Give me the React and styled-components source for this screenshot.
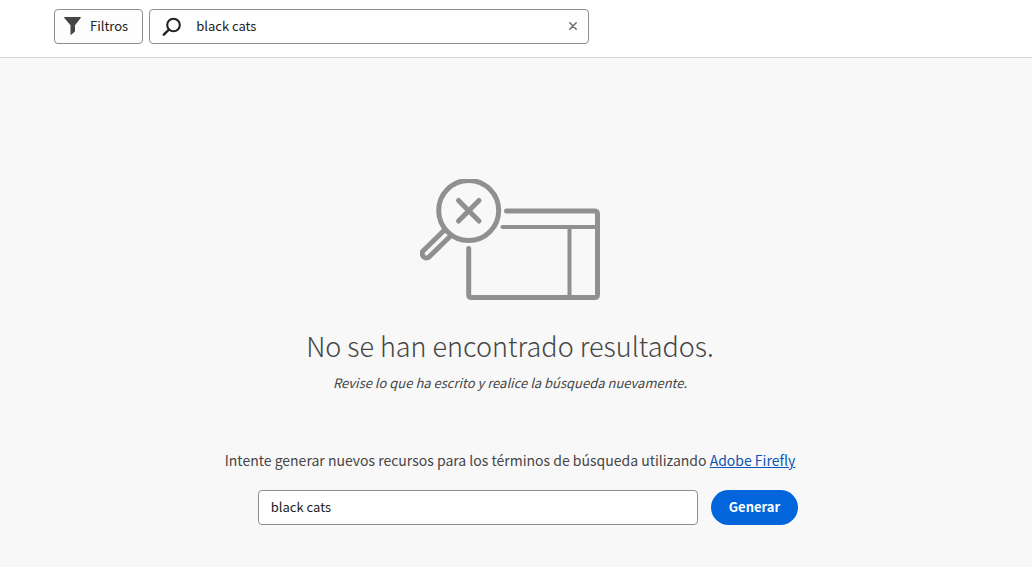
import React, { useState } from "react";
import styled, { createGlobalStyle } from "styled-components";

const GlobalStyle = createGlobalStyle`
  *, *::before, *::after { box-sizing: border-box; }
  html { background: #f8f8f8; }
  body {
    margin: 0;
    background: #f8f8f8;
    color: #464646;
    font-family: "Noto Sans CJK SC", "Open Sans", sans-serif;
    font-size: 13px;
    line-height: 20px;
  }
`;

const Toolbar = styled.header`
  display: flex;
  gap: 6px;
  padding: 9px 54px 13px;
  background: #ffffff;
  border-bottom: 1px solid #d3d3d3;
`;

const FilterButton = styled.button`
  display: flex;
  align-items: center;
  gap: 9px;
  height: 35px;
  padding: 0 14px 2px 9px;
  border: 1px solid #8e8e8e;
  border-radius: 4px;
  background: #fdfdfd;
  color: #222222;
  font: inherit;
`;

const Field = styled.div`
  display: flex;
  align-items: center;
  flex: 0 1 440px;
  min-width: 0;
  height: 35px;
  padding: 0 ${(p) => (p.$search ? "6px" : "12px")} 2px 12px;
  gap: 14px;
  border: 1px solid #8e8e8e;
  border-radius: 4px;
  background: #ffffff;
`;

const TextInput = styled.input`
  flex: 1;
  min-width: 0;
  padding: 0;
  border: 0;
  outline: 0;
  background: transparent;
  color: #222222;
  font: inherit;
`;

const ClearButton = styled.button`
  display: flex;
  align-items: center;
  justify-content: center;
  width: 18px;
  height: 24px;
  padding: 0;
  border: 0;
  background: transparent;
`;

const Main = styled.main`
  display: flex;
  flex-direction: column;
  align-items: center;
  padding: 121px 12px 42px 0;
`;

const Title = styled.h1`
  margin: 26px 0 0;
  font-size: 27px;
  font-weight: 300;
  line-height: 40px;
  text-align: center;
`;

const Hint = styled.p`
  margin: 7px 0 0;
  font-style: italic;
  text-align: center;
`;

const Suggestion = styled.p`
  margin: 57px 0 0;
  font-size: 14px;
  text-align: center;
`;

const Link = styled.a`
  color: #0d55b5;
  text-decoration: underline;
`;

const GenerateForm = styled.form`
  display: flex;
  justify-content: center;
  gap: 13px;
  width: 100%;
  margin-top: 20px;
  padding-left: 36px;
`;

const GenerateButton = styled.button`
  height: 35px;
  padding: 0 18px 2px;
  border: 0;
  border-radius: 18px;
  background: #0265dc;
  color: #ffffff;
  font: inherit;
  font-weight: 700;
`;

const FilterIcon = () => (
  <svg width="17" height="18" viewBox="0 0 17 18" fill="#464646" aria-hidden="true">
    <path d="M.8 0h15.4c.6 0 .9.7.5 1.1L11 8.2v6.2L7.2 17.8c-.3.3-.7.1-.7-.3V8.2L.3 1.1C-.1.7.2 0 .8 0Z" />
  </svg>
);

const SearchIcon = () => (
  <svg width="20" height="20" viewBox="0 0 20 20" fill="none" stroke="#222222" aria-hidden="true">
    <circle cx="11.5" cy="9" r="6.3" strokeWidth="2.1" />
    <path d="M7 13.5 1.8 18.7" strokeWidth="2.4" strokeLinecap="round" />
  </svg>
);

const ClearIcon = () => (
  <svg width="8" height="8" viewBox="0 0 8 8" fill="none" stroke="#6b6b6b" strokeWidth="1.5" strokeLinecap="round" aria-hidden="true">
    <path d="M.8.8l6.4 6.4M7.2.8.8 7.2" />
  </svg>
);

const NoResultsIllustration = () => (
  <svg width="180" height="121" viewBox="0 0 180 121" fill="none" stroke="#909090" strokeLinecap="round" strokeLinejoin="round" aria-hidden="true">
    <circle cx="48.7" cy="31.5" r="30" strokeWidth="5" />
    <path d="M38.5 21.5 59 42M59 21.5 38.5 42" strokeWidth="5" />
    <path d="M24 51.5 3.5 71.5C1.5 73.5 2 76.5 3.8 78C5.5 79.5 8 79 9.5 77.5L30.5 57" strokeWidth="5" />
    <path d="M86.5 32H174.5Q177.5 32 177.5 35V115.5Q177.5 118.5 174.5 118.5H51.5Q48.7 118.5 48.7 115.5V69.5" strokeWidth="5" />
    <path d="M82.5 48H177M149.5 48V118" strokeWidth="4" />
  </svg>
);

export default function App() {
  const [search, setSearch] = useState("black cats");
  const [prompt, setPrompt] = useState("black cats");

  return (
    <>
      <GlobalStyle />
      <Toolbar>
        <FilterButton type="button">
          <FilterIcon />
          Filtros
        </FilterButton>
        <Field $search>
          <SearchIcon />
          <TextInput
            type="text"
            aria-label="Buscar"
            value={search}
            onChange={(e) => setSearch(e.target.value)}
          />
          <ClearButton type="button" aria-label="Borrar" onClick={() => setSearch("")}>
            <ClearIcon />
          </ClearButton>
        </Field>
      </Toolbar>
      <Main>
        <NoResultsIllustration />
        <Title>No se han encontrado resultados.</Title>
        <Hint>Revise lo que ha escrito y realice la búsqueda nuevamente.</Hint>
        <Suggestion>
          Intente generar nuevos recursos para los términos de búsqueda utilizando{" "}
          <Link href="#firefly">Adobe Firefly</Link>
        </Suggestion>
        <GenerateForm onSubmit={(e) => e.preventDefault()}>
          <Field>
            <TextInput
              type="text"
              aria-label="Términos de búsqueda"
              value={prompt}
              onChange={(e) => setPrompt(e.target.value)}
            />
          </Field>
          <GenerateButton type="submit">Generar</GenerateButton>
        </GenerateForm>
      </Main>
    </>
  );
}
